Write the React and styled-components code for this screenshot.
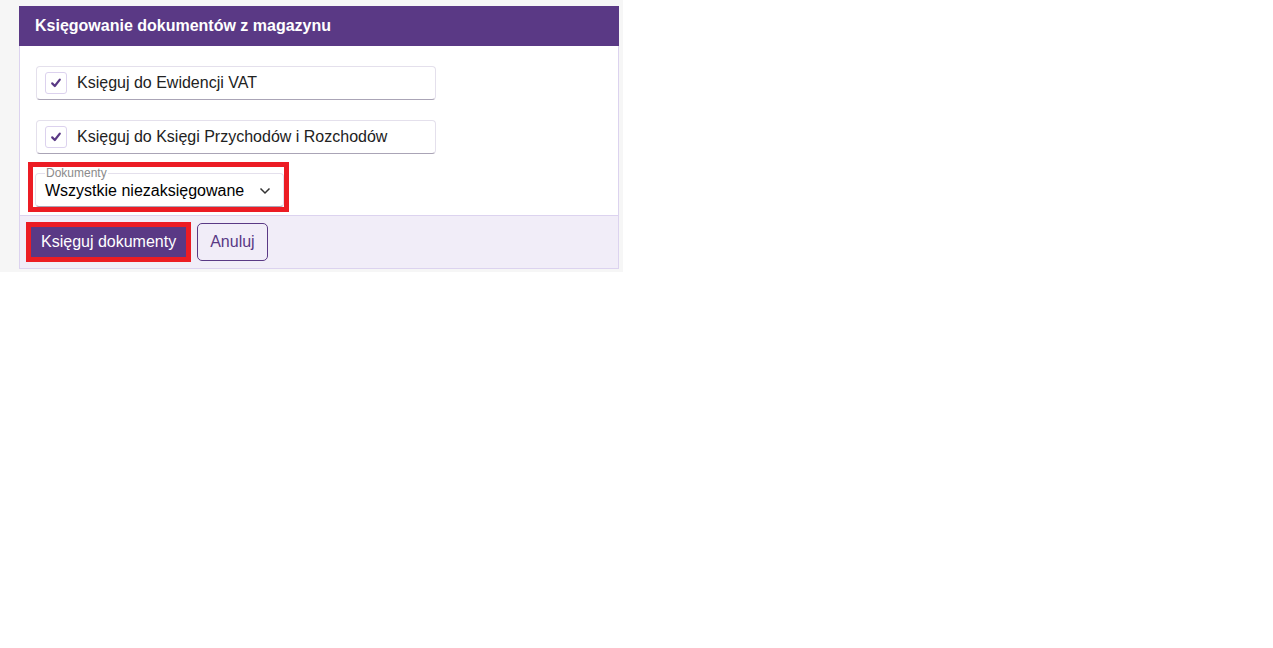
import React from "react";
import styled, { createGlobalStyle } from "styled-components";

const Global = createGlobalStyle`
  html, body { margin: 0; padding: 0; background: #ffffff; }
  body { font-family: "Liberation Sans", Arial, sans-serif; }
  * { box-sizing: border-box; }
`;

const Backdrop = styled.div`
  width: 623px;
  background: #f6f6f6;
  padding: 6px 4px 3px 19px;
`;

const Panel = styled.div`
  width: 600px;
  border: 1px solid #dcd3ef;
  border-top: none;
  background: #ffffff;
`;

const Header = styled.div`
  height: 40px;
  margin: 0 -1px;
  background: #5a3985;
  color: #ffffff;
  font-weight: bold;
  font-size: 16px;
  display: flex;
  align-items: center;
  padding-left: 16px;
`;

const Body = styled.div`
  padding: 20px 16px 3px 16px;
  display: flex;
  flex-direction: column;
  align-items: flex-start;
`;

const CheckRow = styled.label`
  width: 400px;
  height: 34px;
  display: flex;
  align-items: center;
  gap: 10px;
  padding-left: 8px;
  border: 1px solid #e4e0ec;
  border-bottom-color: #aaa4b6;
  border-radius: 4px;
  font-size: 16px;
  color: #222222;
  margin-bottom: ${(p) => p.$mb || 0}px;
`;

const Box = styled.span`
  width: 22px;
  height: 22px;
  border: 1px solid #dcd2ee;
  border-radius: 3px;
  display: flex;
  align-items: center;
  justify-content: center;
`;

const Highlight = styled.div`
  border: 5px solid #ec1c24;
  margin: ${(p) => p.$m || "0"};
`;

const SelectWrap = styled.fieldset`
  width: 249px;
  height: 40px;
  margin: 0 0 0 2px;
  padding: 0 0 0 9px;
  border: 1px solid #e4e0ec;
  border-bottom-color: #aaa4b6;
  border-radius: 4px;
  display: block;
  background: transparent;
`;

const Legend = styled.legend`
  font-size: 12px;
  color: #8b8b8b;
  padding: 0 1px;
  margin-left: 0;
  line-height: 12px;
`;

const SelectValue = styled.div`
  display: flex;
  align-items: center;
  justify-content: space-between;
  padding-right: 12px;
  font-size: 16px;
  color: #000000;
  height: 26px;
  margin-top: -1px;
`;

const Footer = styled.div`
  background: #f1edf8;
  border-top: 1px solid #dcd3ef;
  height: 53px;
  display: flex;
  align-items: center;
  padding-left: 6px;
  gap: 6px;
`;

const Primary = styled.button`
  height: 30px;
  padding: 0 10px 0 10px;
  background: #5a3985;
  color: #ffffff;
  border: none;
  font-family: "Liberation Sans", Arial, sans-serif;
  font-size: 16px;
  display: block;
`;

const Secondary = styled.button`
  height: 38px;
  padding: 0 12px;
  background: transparent;
  color: #5a3985;
  border: 1px solid #5a3985;
  border-radius: 5px;
  font-family: "Liberation Sans", Arial, sans-serif;
  font-size: 16px;
`;

const Check = () => (
  <svg width="12" height="12" viewBox="0 0 12 12">
    <path d="M2.2 6.4 L4.8 9 L9.8 2.6" fill="none" stroke="#5a3985" strokeWidth="2.2" strokeLinecap="round" strokeLinejoin="round" />
  </svg>
);

const Chevron = () => (
  <svg width="12" height="8" viewBox="0 0 12 8">
    <path d="M1.5 1.5 L6 6 L10.5 1.5" fill="none" stroke="#333" strokeWidth="1.5" />
  </svg>
);

export default function App() {
  return (
    <>
      <Global />
      <Backdrop>
        <Panel>
          <Header>Księgowanie dokumentów z magazynu</Header>
          <Body>
            <CheckRow $mb={20}>
              <Box><Check /></Box>
              Księguj do Ewidencji VAT
            </CheckRow>
            <CheckRow $mb={8}>
              <Box><Check /></Box>
              Księguj do Księgi Przychodów i Rozchodów
            </CheckRow>
            <Highlight $m="0 0 0 -8px">
              <SelectWrap>
                <Legend>Dokumenty</Legend>
                <SelectValue>
                  Wszystkie niezaksięgowane
                  <Chevron />
                </SelectValue>
              </SelectWrap>
            </Highlight>
          </Body>
          <Footer>
            <Highlight>
              <Primary>Księguj dokumenty</Primary>
            </Highlight>
            <Secondary>Anuluj</Secondary>
          </Footer>
        </Panel>
      </Backdrop>
    </>
  );
}
